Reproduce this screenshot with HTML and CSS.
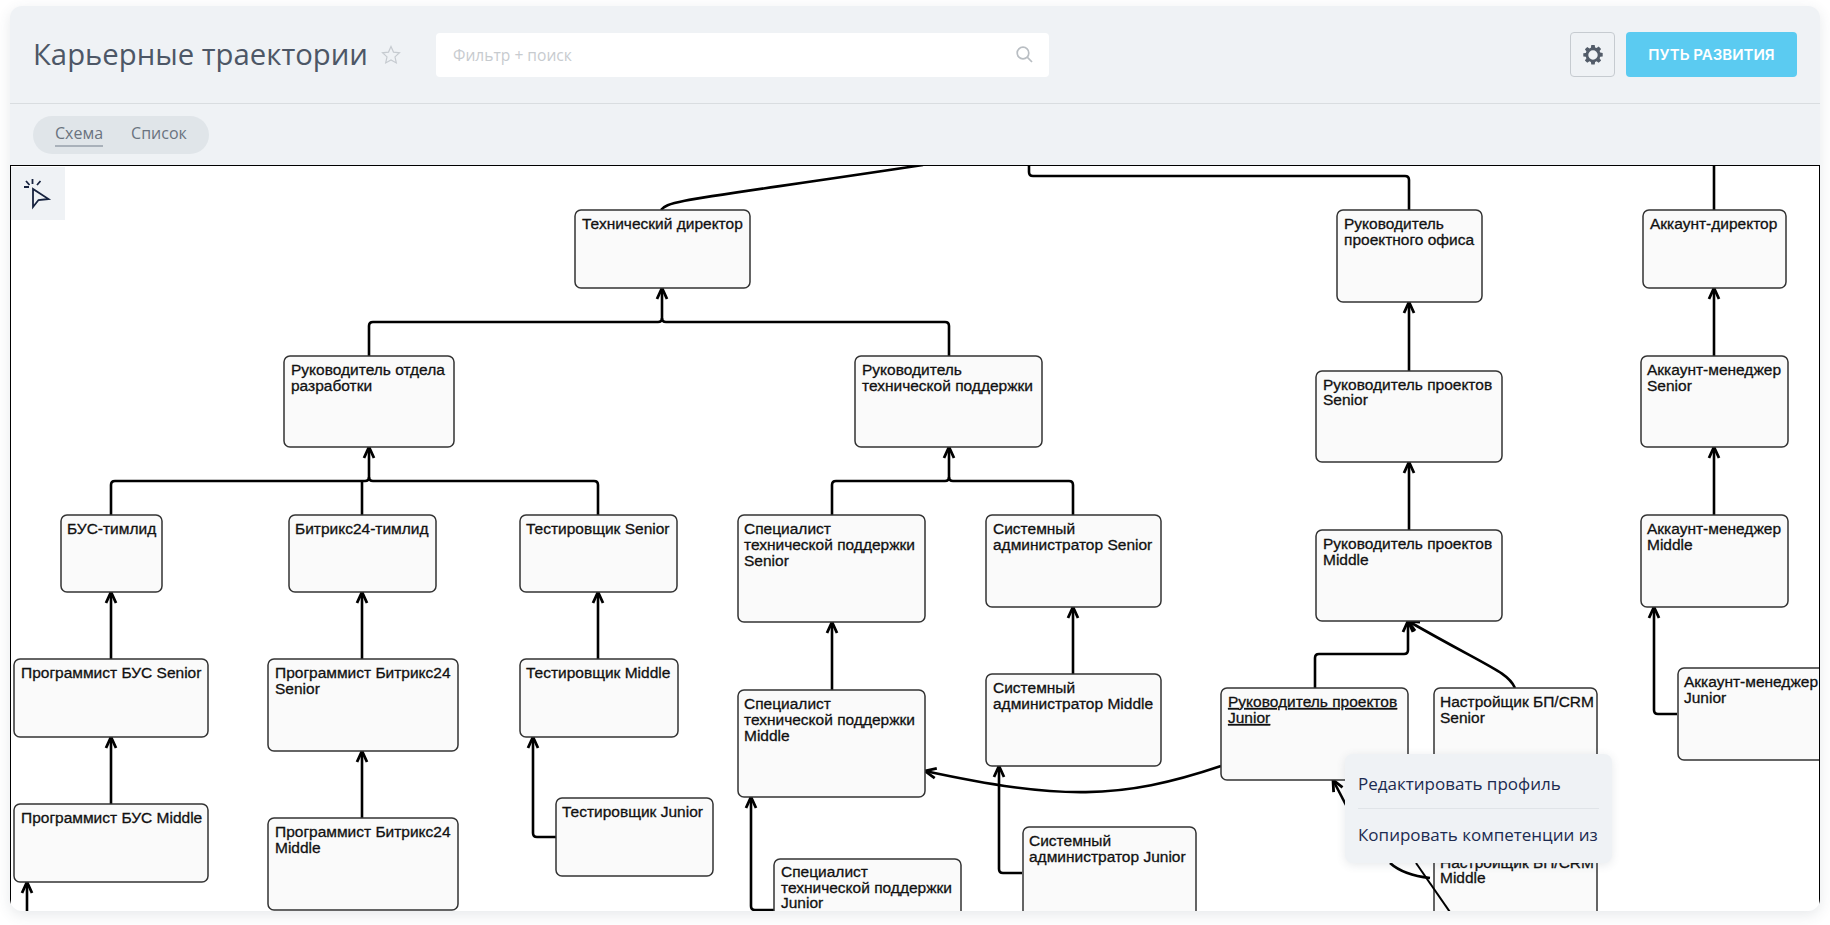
FILE: index.html
```html
<!DOCTYPE html>
<html lang="ru">

<head>
    <meta charset="UTF-8">
    <title>Карьерные траектории</title>
    <link rel="stylesheet" href="styles.css">
</head>

<body>
    <div class="panel">
        <!-- Top bar -->
        <div class="header">
            <h1 class="title">Карьерные траектории</h1>
            <svg class="star" viewBox="0 0 20 20" width="20" height="20">
                <path d="M10 1.500l2.500 5.600 6 .7-4.500 4.100 1.300 6L10 14.900 4.700 17.900l1.300-6L1.500 7.800l6-.7z" />
            </svg>
            <div class="search">
                <span class="search-text">Фильтр + поиск</span>
                <svg class="search-icon" viewBox="0 0 17 17" width="17" height="17">
                    <circle cx="7" cy="7" r="5.800" />
                    <path d="M11.200 11.200L16 16" />
                </svg>
            </div>
            <button class="gear-btn">
                <svg viewBox="0 0 20 20" width="20" height="20">
                    <path class="gear" fill-rule="evenodd" d="M8.300 0h3.400l.4 2.500 1.500.6 2.100-1.500 2.400 2.400-1.500 2.100.6 1.500 2.500.4v3.400l-2.500.4-.6 1.500 1.500 2.100-2.400 2.400-2.100-1.500-1.500.6-.4 2.500H8.300l-.4-2.500-1.500-.6-2.100 1.500-2.400-2.400 1.500-2.100-.6-1.500-2.500-.4V8.300l2.500-.4.6-1.500-1.500-2.100 2.400-2.400 2.100 1.500 1.500-.6zM10 5.300a4.700 4.700 0 1 0 0 9.400 4.700 4.700 0 0 0 0-9.400z" />
                </svg>
            </button>
            <button class="main-btn">ПУТЬ РАЗВИТИЯ</button>
        </div>

        <!-- View switch -->
        <div class="tabs-row">
            <div class="tabs">
                <span class="tab active">Схема</span>
                <span class="tab">Список</span>
            </div>
        </div>

        <!-- Diagram -->
        <div class="canvas">
            <div class="tool-tile">
                <svg viewBox="11 167 54 53" width="54" height="53">
                    <path d="M33 189V207L38.500 200L48.500 199Z" />
                    <path d="M32.500 179v5M26 181l3.500 4M24 187h5M40.500 181l-3.500 4" />
                </svg>
            </div>

            <svg class="diagram" viewBox="11 166 1808 745" width="1808" height="745">
                <defs>
                    <marker id="open" viewBox="0 0 14 14" refX="13" refY="7" markerWidth="14" markerHeight="14" markerUnits="userSpaceOnUse" orient="auto">
                        <path d="M2 2L13 7L2 12" fill="none" stroke="#000" stroke-width="2.800" />
                    </marker>
                </defs>

                <g class="edges">
                    <path d="M661 210C668 200 690 200 923 165" />
                    <path d="M1029 165v7q0 4 4 4h372q4 0 4 4v30" />
                    <path d="M1714 165v45" />

                    <path marker-end="url(#open)" d="M369 356v-30q0-4 4-4h285q4 0 4-4v-30" />
                    <path d="M949 356v-30q0-4-4-4h-279q-4 0-4-4" />

                    <path marker-end="url(#open)" d="M111 515v-30q0-4 4-4h250q4 0 4-4v-30" />
                    <path d="M598 515v-30q0-4-4-4h-221q-4 0-4-4" />
                    <path d="M362 515v-34" />

                    <path marker-end="url(#open)" d="M832 515v-30q0-4 4-4h109q4 0 4-4v-30" />
                    <path d="M1073 515v-30q0-4-4-4h-116q-4 0-4-4" />

                    <path marker-end="url(#open)" d="M1409 371v-69" />
                    <path marker-end="url(#open)" d="M1409 530v-68" />
                    <path marker-end="url(#open)" d="M1714 356v-68" />
                    <path marker-end="url(#open)" d="M1714 515v-68" />

                    <path marker-end="url(#open)" d="M111 659v-67" />
                    <path marker-end="url(#open)" d="M362 659v-67" />
                    <path marker-end="url(#open)" d="M598 659v-67" />
                    <path marker-end="url(#open)" d="M832 690v-68" />
                    <path marker-end="url(#open)" d="M1073 674v-67" />
                    <path marker-end="url(#open)" d="M111 804v-67" />
                    <path marker-end="url(#open)" d="M362 818v-67" />
                    <path marker-end="url(#open)" d="M27 915v-33" />

                    <path marker-end="url(#open)" d="M556 837h-19q-4 0-4-4v-96" />
                    <path marker-end="url(#open)" d="M774 910h-19q-4 0-4-4v-109" />
                    <path marker-end="url(#open)" d="M1022 873h-19q-4 0-4-4v-103" />
                    <path marker-end="url(#open)" d="M1677 714h-19q-4 0-4-4v-103" />

                    <path marker-end="url(#open)" d="M1315 688v-30q0-4 4-4h85q4 0 4-4v-29" />
                    <path marker-end="url(#open)" d="M1515 688C1508 672 1490 668 1408 621" />
                    <path marker-end="url(#open)" d="M1221 766C1120 800 1060 800 925 771" />
                    <path marker-end="url(#open)" d="M1360 832L1333 780" />
                    <path d="M1390 863C1400 872 1412 876 1430 878" />
                </g>

                <g class="nodes">
                    <rect x="575" y="210" width="175" height="78" rx="6" />
                    <rect x="1337" y="210" width="145" height="92" rx="6" />
                    <rect x="1643" y="210" width="143" height="78" rx="6" />
                    <rect x="284" y="356" width="170" height="91" rx="6" />
                    <rect x="855" y="356" width="187" height="91" rx="6" />
                    <rect x="1316" y="371" width="186" height="91" rx="6" />
                    <rect x="1641" y="356" width="147" height="91" rx="6" />
                    <rect x="61" y="515" width="101" height="77" rx="6" />
                    <rect x="289" y="515" width="147" height="77" rx="6" />
                    <rect x="520" y="515" width="157" height="77" rx="6" />
                    <rect x="738" y="515" width="187" height="107" rx="6" />
                    <rect x="986" y="515" width="175" height="92" rx="6" />
                    <rect x="1316" y="530" width="186" height="91" rx="6" />
                    <rect x="1641" y="515" width="147" height="92" rx="6" />
                    <rect x="14" y="659" width="194" height="78" rx="6" />
                    <rect x="268" y="659" width="190" height="92" rx="6" />
                    <rect x="520" y="659" width="158" height="78" rx="6" />
                    <rect x="738" y="690" width="187" height="107" rx="6" />
                    <rect x="986" y="674" width="175" height="92" rx="6" />
                    <rect x="1221" y="688" width="187" height="92" rx="6" />
                    <rect x="1434" y="688" width="163" height="92" rx="6" />
                    <rect x="1678" y="668" width="160" height="92" rx="6" />
                    <rect x="556" y="798" width="157" height="78" rx="6" />
                    <rect x="14" y="804" width="194" height="78" rx="6" />
                    <rect x="268" y="818" width="190" height="92" rx="6" />
                    <rect x="1023" y="827" width="173" height="107" rx="6" />
                    <rect x="774" y="859" width="187" height="107" rx="6" />
                    <rect x="1434" y="842" width="163" height="107" rx="6" />
                </g>

                <!-- this one runs over the node -->
                <g class="edges">
                    <path class="thin" d="M1416 863L1452 915" />
                </g>

                <g class="labels">
                    <text x="582" y="229">Технический директор</text>
                    <text x="1344" y="229">Руководитель</text>
                    <text x="1344" y="245">проектного офиса</text>
                    <text x="1650" y="229">Аккаунт-директор</text>
                    <text x="291" y="375">Руководитель отдела</text>
                    <text x="291" y="391">разработки</text>
                    <text x="862" y="375">Руководитель</text>
                    <text x="862" y="391">технической поддержки</text>
                    <text x="1323" y="390">Руководитель проектов</text>
                    <text x="1323" y="405">Senior</text>
                    <text x="1647" y="375">Аккаунт-менеджер</text>
                    <text x="1647" y="391">Senior</text>
                    <text x="67" y="534">БУС-тимлид</text>
                    <text x="295" y="534">Битрикс24-тимлид</text>
                    <text x="526" y="534">Тестировщик Senior</text>
                    <text x="744" y="534">Специалист</text>
                    <text x="744" y="550">технической поддержки</text>
                    <text x="744" y="566">Senior</text>
                    <text x="993" y="534">Системный</text>
                    <text x="993" y="550">администратор Senior</text>
                    <text x="1323" y="549">Руководитель проектов</text>
                    <text x="1323" y="565">Middle</text>
                    <text x="1647" y="534">Аккаунт-менеджер</text>
                    <text x="1647" y="550">Middle</text>
                    <text x="21" y="678">Программист БУС Senior</text>
                    <text x="275" y="678">Программист Битрикс24</text>
                    <text x="275" y="694">Senior</text>
                    <text x="526" y="678">Тестировщик Middle</text>
                    <text x="744" y="709">Специалист</text>
                    <text x="744" y="725">технической поддержки</text>
                    <text x="744" y="741">Middle</text>
                    <text x="993" y="693">Системный</text>
                    <text x="993" y="709">администратор Middle</text>
                    <text class="picked" x="1228" y="707">Руководитель проектов</text>
                    <text class="picked" x="1228" y="723">Junior</text>
                    <text x="1440" y="707">Настройщик БП/CRM</text>
                    <text x="1440" y="723">Senior</text>
                    <text x="1684" y="687">Аккаунт-менеджер</text>
                    <text x="1684" y="703">Junior</text>
                    <text x="562" y="817">Тестировщик Junior</text>
                    <text x="21" y="823">Программист БУС Middle</text>
                    <text x="275" y="837">Программист Битрикс24</text>
                    <text x="275" y="853">Middle</text>
                    <text x="1029" y="846">Системный</text>
                    <text x="1029" y="862">администратор Junior</text>
                    <text x="781" y="877">Специалист</text>
                    <text x="781" y="893">технической поддержки</text>
                    <text x="781" y="908">Junior</text>
                    <text x="1440" y="868">Настройщик БП/CRM</text>
                    <text x="1440" y="883">Middle</text>
                </g>
            </svg>

            <!-- Node context menu -->
            <div class="menu">
                <div class="menu-item">Редактировать профиль</div>
                <div class="menu-item">Копировать компетенции из</div>
            </div>
        </div>
    </div>
</body>

</html>
```

FILE: styles.css
```css
* {
    box-sizing: border-box;
}

body {
    margin: 0;
    padding: 6px 10px 14px;
    height: 925px;
    background-color: #fff;
    font-family: "Open Sans", sans-serif;
    overflow: hidden;
}

.panel {
    display: flex;
    flex-direction: column;
    height: 905px;
    background-color: #eff2f5;
    border-radius: 12px;
    box-shadow: 0 4px 14px rgba(60, 70, 90, 0.12);
    overflow: hidden;
}

.header {
    display: flex;
    align-items: center;
    height: 98px;
    padding: 0 23px;
    border-bottom: 1px solid #d9dde0;
}

.title {
    margin: 0;
    margin-top: -2px;
    font-size: 29.300px;
    font-weight: 400;
    color: #4d5766;
}

.star {
    margin-left: 13px;
    fill: none;
    stroke: #c6cbd0;
    stroke-width: 1.2;
}

.search {
    display: flex;
    align-items: center;
    justify-content: space-between;
    width: 613px;
    height: 44px;
    margin-left: 35px;
    margin-right: auto;
    padding: 0 16px 0 17px;
    background-color: #fff;
    border-radius: 4px;
}

.search-text {
    font-size: 15.600px;
    color: #c7cbcf;
}

.search-icon {
    fill: none;
    stroke: #b9bec3;
    stroke-width: 1.7;
}

.gear-btn {
    display: flex;
    align-items: center;
    justify-content: center;
    width: 45px;
    height: 45px;
    margin-right: 11px;
    padding: 0;
    background: none;
    border: 1px solid #c6cbd0;
    border-radius: 4px;
}

.gear {
    fill: #535c69;
}

.main-btn {
    width: 171px;
    height: 45px;
    background-color: #5bcbf1;
    border: none;
    border-radius: 4px;
    font-family: "Inter", sans-serif;
    font-size: 15px;
    font-weight: 600;
    color: #fff;
}

.tabs-row {
    display: flex;
    align-items: center;
    height: 61px;
    padding: 0 23px;
}

.tabs {
    display: flex;
    align-items: center;
    gap: 28px;
    height: 38px;
    padding: 0 22px;
    background-color: #e0e5e9;
    border-radius: 19px;
}

.tab {
    padding-bottom: 1px;
    font-size: 16px;
    color: #6a737f;
    border-bottom: 2px solid transparent;
}

.tab.active {
    border-bottom-color: #a9b1ba;
}

.canvas {
    position: relative;
    flex: 1;
    background-color: #fff;
    border: 1px solid #000;
    border-bottom: none;
    overflow: hidden;
}

.diagram {
    display: block;
}

.tool-tile {
    position: absolute;
    left: 0;
    top: 1px;
    width: 54px;
    height: 53px;
    background-color: #eff2f5;
    z-index: 1;
}

.tool-tile svg {
    display: block;
    fill: none;
    stroke: #17233f;
    stroke-width: 1.8;
}

.edges path {
    fill: none;
    stroke: #000;
    stroke-width: 2.6;
}

.edges .thin {
    stroke-width: 2;
}

.nodes rect {
    fill: #fafafa;
    stroke: #333;
    stroke-width: 1.5;
}

.labels text {
    font-family: "Liberation Sans", sans-serif;
    font-size: 15.500px;
    fill: #111;
    stroke: #111;
    stroke-width: 0.3;
}

.labels .picked {
    text-decoration: underline;
}

.menu {
    position: absolute;
    left: 1334px;
    top: 588px;
    width: 267px;
    height: 109px;
    padding: 0 13px;
    background-color: #eff2f5;
    border-radius: 8px;
    box-shadow: 0 2px 10px rgba(60, 70, 90, 0.12);
}

.menu-item {
    height: 54px;
    line-height: 59px;
    font-size: 17px;
    color: #1c2b50;
    white-space: nowrap;
}

.menu-item + .menu-item {
    height: 55px;
    line-height: 51px;
    border-top: 1px solid #e0e4e8;
}
```
